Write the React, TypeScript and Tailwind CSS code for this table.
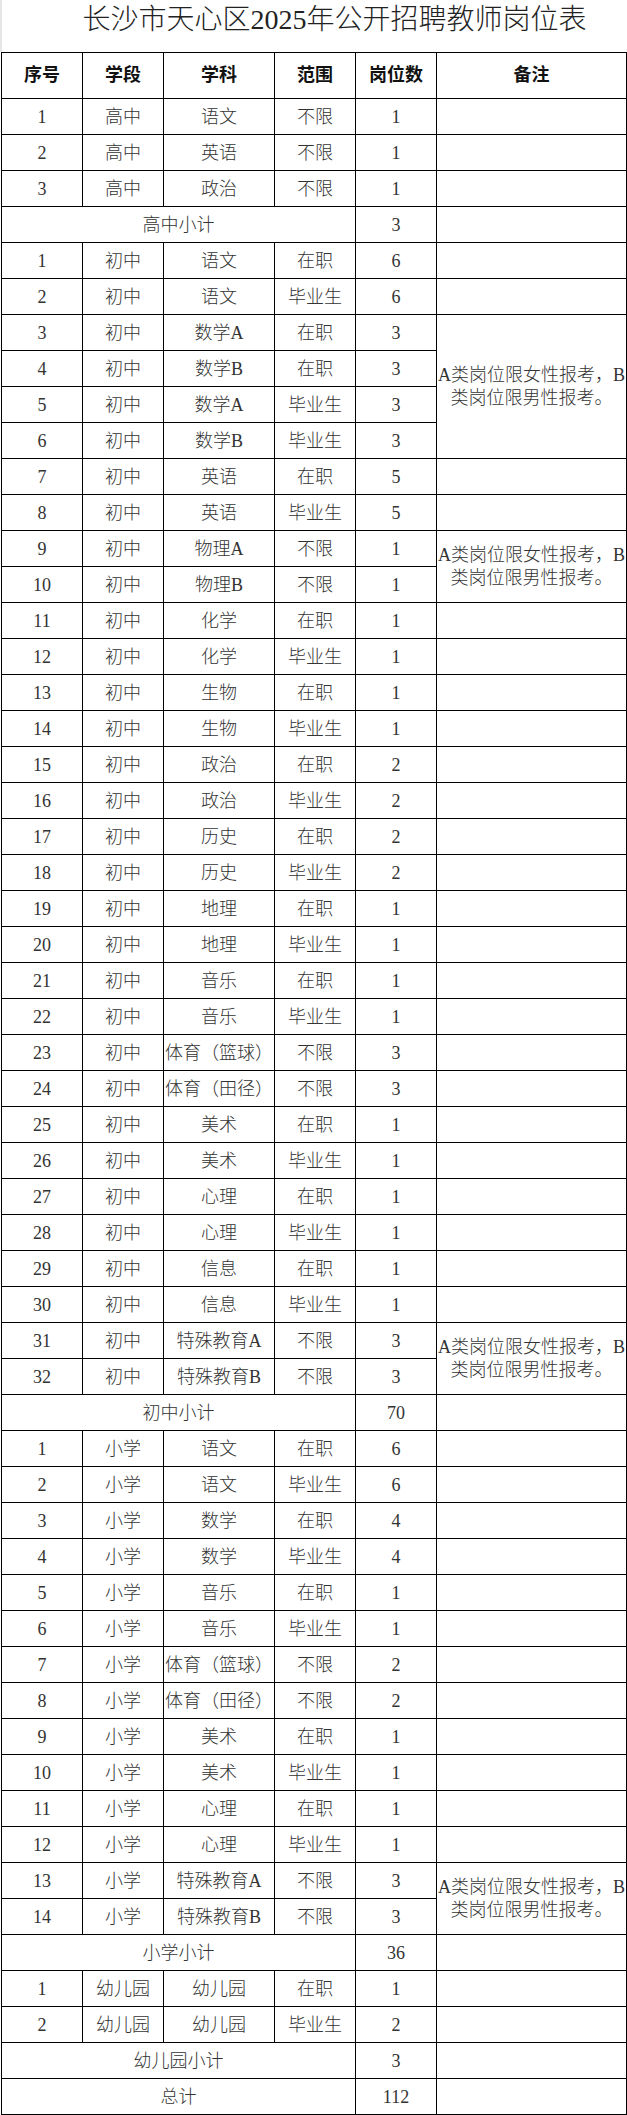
import React from "react";

type Remark = { kind: "empty" } | { kind: "note"; span: number } | { kind: "covered" };

type Row =
  | {
      type: "data";
      no: number;
      stage: string;
      subject: string;
      scope: string;
      count: number;
      remark: Remark;
    }
  | { type: "sum"; label: string; count: number };

const E: Remark = { kind: "empty" };
const C: Remark = { kind: "covered" };
const N = (span: number): Remark => ({ kind: "note", span });

const d = (
  no: number,
  stage: string,
  subject: string,
  scope: string,
  count: number,
  remark: Remark = E
): Row => ({ type: "data", no, stage, subject, scope, count, remark });

const rows: Row[] = [
  d(1, "高中", "语文", "不限", 1),
  d(2, "高中", "英语", "不限", 1),
  d(3, "高中", "政治", "不限", 1),
  { type: "sum", label: "高中小计", count: 3 },
  d(1, "初中", "语文", "在职", 6),
  d(2, "初中", "语文", "毕业生", 6),
  d(3, "初中", "数学A", "在职", 3, N(4)),
  d(4, "初中", "数学B", "在职", 3, C),
  d(5, "初中", "数学A", "毕业生", 3, C),
  d(6, "初中", "数学B", "毕业生", 3, C),
  d(7, "初中", "英语", "在职", 5),
  d(8, "初中", "英语", "毕业生", 5),
  d(9, "初中", "物理A", "不限", 1, N(2)),
  d(10, "初中", "物理B", "不限", 1, C),
  d(11, "初中", "化学", "在职", 1),
  d(12, "初中", "化学", "毕业生", 1),
  d(13, "初中", "生物", "在职", 1),
  d(14, "初中", "生物", "毕业生", 1),
  d(15, "初中", "政治", "在职", 2),
  d(16, "初中", "政治", "毕业生", 2),
  d(17, "初中", "历史", "在职", 2),
  d(18, "初中", "历史", "毕业生", 2),
  d(19, "初中", "地理", "在职", 1),
  d(20, "初中", "地理", "毕业生", 1),
  d(21, "初中", "音乐", "在职", 1),
  d(22, "初中", "音乐", "毕业生", 1),
  d(23, "初中", "体育（篮球）", "不限", 3),
  d(24, "初中", "体育（田径）", "不限", 3),
  d(25, "初中", "美术", "在职", 1),
  d(26, "初中", "美术", "毕业生", 1),
  d(27, "初中", "心理", "在职", 1),
  d(28, "初中", "心理", "毕业生", 1),
  d(29, "初中", "信息", "在职", 1),
  d(30, "初中", "信息", "毕业生", 1),
  d(31, "初中", "特殊教育A", "不限", 3, N(2)),
  d(32, "初中", "特殊教育B", "不限", 3, C),
  { type: "sum", label: "初中小计", count: 70 },
  d(1, "小学", "语文", "在职", 6),
  d(2, "小学", "语文", "毕业生", 6),
  d(3, "小学", "数学", "在职", 4),
  d(4, "小学", "数学", "毕业生", 4),
  d(5, "小学", "音乐", "在职", 1),
  d(6, "小学", "音乐", "毕业生", 1),
  d(7, "小学", "体育（篮球）", "不限", 2),
  d(8, "小学", "体育（田径）", "不限", 2),
  d(9, "小学", "美术", "在职", 1),
  d(10, "小学", "美术", "毕业生", 1),
  d(11, "小学", "心理", "在职", 1),
  d(12, "小学", "心理", "毕业生", 1),
  d(13, "小学", "特殊教育A", "不限", 3, N(2)),
  d(14, "小学", "特殊教育B", "不限", 3, C),
  { type: "sum", label: "小学小计", count: 36 },
  d(1, "幼儿园", "幼儿园", "幼儿园", 0),
  d(2, "幼儿园", "幼儿园", "幼儿园", 0),
  { type: "sum", label: "幼儿园小计", count: 3 },
  { type: "sum", label: "总计", count: 112 },
];

// fix kindergarten rows (scope + counts)
rows[52] = d(1, "幼儿园", "幼儿园", "在职", 1);
rows[53] = d(2, "幼儿园", "幼儿园", "毕业生", 2);

const cell = "border border-black text-center align-middle p-0";

export default function App() {
  return (
    <div className="w-[627px] bg-white font-['Liberation_Serif','Noto_Sans_CJK_SC',serif] text-[#333]">
      <div className="h-[52px] border-l-2 border-[#e6e6e6] pl-[40px] pt-[6px] text-center text-[28px] leading-[28px] font-light text-[#222]">
        长沙市天心区2025年公开招聘教师岗位表
      </div>
      <table className="ml-px w-[625px] table-fixed border-collapse">
        <colgroup>
          <col className="w-[81px]" />
          <col className="w-[81px]" />
          <col className="w-[111px]" />
          <col className="w-[81px]" />
          <col className="w-[81px]" />
          <col className="w-[190px]" />
        </colgroup>
        <thead>
          <tr className="h-[46px] text-[18px] font-bold text-[#111]">
            <th className={cell}>序号</th>
            <th className={cell}>学段</th>
            <th className={cell}>学科</th>
            <th className={cell}>范围</th>
            <th className={cell}>岗位数</th>
            <th className={cell}>备注</th>
          </tr>
        </thead>
        <tbody className="text-[18px] font-light leading-[22px]">
          {rows.map((r, i) =>
            r.type === "sum" ? (
              <tr key={i} className="h-[36px]">
                <td className={cell} colSpan={4}>
                  {r.label}
                </td>
                <td className={cell}>{r.count}</td>
                <td className={cell}></td>
              </tr>
            ) : (
              <tr key={i} className="h-[36px]">
                <td className={cell}>{r.no}</td>
                <td className={cell}>{r.stage}</td>
                <td className={`${cell} whitespace-nowrap`}>{r.subject}</td>
                <td className={cell}>{r.scope}</td>
                <td className={cell}>{r.count}</td>
                {r.remark.kind === "empty" && <td className={cell}></td>}
                {r.remark.kind === "note" && (
                  <td className={`${cell} whitespace-nowrap leading-[23px]`} rowSpan={r.remark.span}>
                    <div>A类岗位限女性报考，B</div>
                    <div>类岗位限男性报考。</div>
                  </td>
                )}
              </tr>
            )
          )}
        </tbody>
      </table>
    </div>
  );
}
